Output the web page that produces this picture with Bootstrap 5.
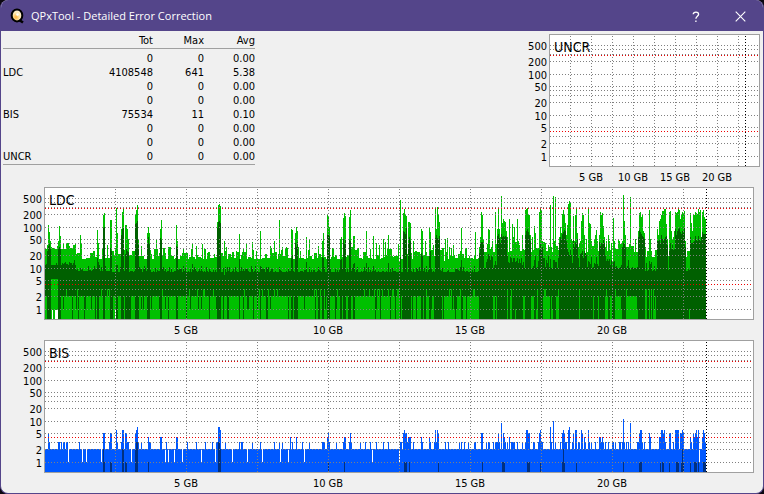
<!DOCTYPE html>
<html lang="en">
<head>
<meta charset="utf-8">
<meta name="viewport" content="width=device-width, initial-scale=1">
<title>QPxTool - Detailed Error Correction</title>
<link rel="stylesheet" href="https://cdn.jsdelivr.net/npm/bootstrap@5.3.0/dist/css/bootstrap.min.css">
<style>
  body { background: #0b0710; font-family: "DejaVu Sans Condensed", "DejaVu Sans", sans-serif; font-size: 11px; line-height: 14px; color: #000; }
  .app-window { background: #f0f0f0; border: 1px solid #54458a; border-top: 0; border-radius: 8px; overflow: hidden; }
  .titlebar { background: #54458a; color: #fff; height: 31px; font: 11px/16px "Open Sans", "Noto Sans", sans-serif; padding-left: 9px; }
  .titlebar h1 { font: inherit; margin-left: 6px; }
  .titlebar button { width: 45px; height: 31px; color: #fff; background: none; border: 0; }
  .content { padding-top: 3px; }
  .stats { width: 252px; margin-left: 2px; table-layout: fixed; border-bottom: 1px solid #a0a0a0; }
  .stats .col-total { width: 100px; }
  .stats .col-value { width: 51px; }
  .stats th, .stats td { padding: 0; font-weight: 400; text-align: right; }
  .stats .name { text-align: left; }
  .stats thead th { border-bottom: 1px solid #a0a0a0; }
  .stats tbody tr:first-child > * { padding-top: 3px; }
  .plot { height: 153px; width: 100%; display: block; }
  .plot-small { width: 249px; }
  .plot text { fill: #000; font-size: 11px; }
  .plot .plot-name { font-size: 14px; }
</style>
<script src="https://cdn.jsdelivr.net/npm/bootstrap@5.3.0/dist/js/bootstrap.bundle.min.js"></script>
</head>
<body>
<div class="app-window d-flex flex-column min-vh-100">
  <header class="titlebar d-flex align-items-center">
    <svg width="15" height="16" viewBox="0 0 15 16" aria-hidden="true">
      <defs><radialGradient id="disc" cx=".4" cy=".65" r=".7"><stop offset="0" stop-color="#ffb33c"/><stop offset=".5" stop-color="#ffe9b0"/><stop offset="1" stop-color="#fff4e8"/></radialGradient></defs>
      <path d="M8.5 11.5l4.5 3" stroke="#000" stroke-width="2.6"/>
      <ellipse cx="7" cy="7.4" rx="5.3" ry="6" fill="url(#disc)" stroke="#000" stroke-width="2"/>
      <circle cx="7.5" cy="6.5" r="1.3" fill="#fff"/>
    </svg>
    <h1 class="mb-0 flex-grow-1">QPxTool - Detailed Error Correction</h1>
    <button type="button" aria-label="Help"><svg width="8" height="12" viewBox="0 0 8 12" fill="none" stroke="#fff" stroke-width="1.3"><path d="M1.2 3.3C1.4.4 6.6.3 6.6 3.3C6.6 5.1 3.9 5.4 3.9 7.8"/><path d="M3.9 9.4v1.5"/></svg></button>
    <button type="button" aria-label="Close"><svg width="11" height="11" viewBox="0 0 11 11" stroke="#fff" stroke-width="1.1"><path d="M.7.7l9.6 9.6M10.3.7L.7 10.3"/></svg></button>
  </header>
  <main class="content flex-grow-1">
    <div class="d-flex justify-content-between align-items-start">
      <table class="stats">
        <colgroup><col><col class="col-total"><col class="col-value"><col class="col-value"></colgroup>
        <thead><tr><th class="name"></th><th>Tot</th><th>Max</th><th>Avg</th></tr></thead>
        <tbody>
          <tr><th class="name"></th><td>0</td><td>0</td><td>0.00</td></tr>
          <tr><th class="name">LDC</th><td>4108548</td><td>641</td><td>5.38</td></tr>
          <tr><th class="name"></th><td>0</td><td>0</td><td>0.00</td></tr>
          <tr><th class="name"></th><td>0</td><td>0</td><td>0.00</td></tr>
          <tr><th class="name">BIS</th><td>75534</td><td>11</td><td>0.10</td></tr>
          <tr><th class="name"></th><td>0</td><td>0</td><td>0.00</td></tr>
          <tr><th class="name"></th><td>0</td><td>0</td><td>0.00</td></tr>
          <tr><th class="name">UNCR</th><td>0</td><td>0</td><td>0.00</td></tr>
        </tbody>
      </table>
      <svg class="plot plot-small" data-name="UNCR" data-left="35" data-right="3"></svg>
    </div>
    <svg class="plot" data-name="LDC" data-left="43" data-right="9"></svg>
    <svg class="plot" data-name="BIS" data-left="43" data-right="9"></svg>
  </main>
</div>
<script>
// Samples are indexed 45..705 along the disc; levels are bar heights on the log axis.
const FIRST = 45, LAST = 705, H = 133;
const level = v => v < 1 ? 0 : Math.round(10 + 41 * Math.log10(v) + .2);

function ldcSeries() {
  let s = 77; const rnd = () => (s = (s * 16807) % 2147483647) / 2147483647;
  const max = {}, avg = {}, min = {};
  let hold = 0, current = 0;
  for (let x = FIRST; x <= LAST; x++) {
    const early = x < 76, base = early ? 70 : x < 480 ? 60 : x < 640 ? 67 : 62;
    if (hold-- <= 0) { const r = rnd(); current = Math.round(r * r * (early ? 6 : 12)); hold = Math.floor(rnd() * 3); }
    max[x] = base + current;
    const ab = early ? 54 : x < 110 ? 48 : x < 480 ? 47 : x < 640 ? 51 : 48;
    avg[x] = ab + Math.round(Math.pow(rnd(), 3) * (x > 480 ? 14 : 6));
    const dark = x < 380 ? .1 : x < 480 ? .25 : x < 602 ? .35 : x < 640 ? .18 : .72, m = rnd();
    min[x] = m < dark ? 0 : m < dark + .06 ? 10 : m > .9 ? 30 : 23;
  }
  // x, max levels of consecutive samples, average level (0 keeps the baseline)
  const peaks = [
    [47,[74,94,87,78],76],[58,[78,93,83],72],[63,[76],0],[69,[73],0],[80,[84,75],0],[97,[89,76],64],[103,[104,106],94],[107,[74],0],[110,[99,99],75],[116,[111,86],60],[121,[90,107,111],96],[125,[94,94,90,80],70],[135,[104,109,114,80],100],[141,[73],0],[147,[86,92,86],82],[156,[79],0],[160,[90,99],84],[176,[94,78],76],[183,[70],0],[192,[78],0],[196,[73],0],
    [192,[76],56],[196,[73],0],[202,[75],0],[217,[97,114,115,113],100],[224,[78],52],[226,[72],0],[239,[85],60],[243,[70],0],[246,[76],0],[252,[77],54],[260,[88],60],[270,[73],0],[274,[78],0],[279,[99],56],[286,[72],0],[291,[90,89],66],[295,[86,92,88],80],[306,[82],58],[309,[80],0],[318,[73],0],[322,[78,86],66],[327,[104,103,92],88],[340,[80,82],62],[343,[101,106,103],82],[349,[102,109],80],[353,[83,83],60],[366,[88],58],[373,[83],58],[376,[76],0],[379,[74],0],[383,[80],56],[385,[77],0],[388,[84],58],
    [398,[75],0],[400,[119],66],[403,[106,110,105,103],92],[408,[97,97,96],82],[413,[78],0],[421,[90,88],68],[425,[78],0],[429,[91,87],68],[433,[74],0],[435,[111,90,112,105,97],86],[445,[80],0],[447,[81],0],[453,[74],0],[461,[91],64],[475,[87],0],[479,[72,82,107,104,80],80],[488,[90,89,70,72,78],66],[495,[107],60],[497,[90,112,90,82,123,96,100,98,97,88],88],[507,[82],0],[509,[100],62],[512,[95,82,92],62],[517,[100,78,74],64],[522,[84],0],[525,[109,110,111,104,104,84],92],[532,[82],0],[534,[93,86],64],[539,[107,112,108,78],76],[545,[76],0],[550,[114],62],[553,[123,78,122],64],[559,[82,92,86,105,109,105,96,84],90],[567,[94,115,118,116,80],70],[573,[103,78,104,111,86],84],
    [580,[78,98,106,104,84,98,80],68],[588,[110,96,95,78],62],[594,[80,84,89,78],62],[599,[84,107,104,106,93,82],80],[606,[78],0],[608,[84,78],62],[613,[101,78],60],[618,[80],0],[622,[78,124,98,84],76],[630,[122],56],[635,[80],0],[638,[88,106,107,102,104,88,86],90],[649,[109,80],58],[657,[90,84,98,100,104,108,108,110,110,95,80],84],[669,[107,108,88,80,82,88],76],[675,[107,106,107,111,109,100,105,107,106,108,78],92],[690,[106,96,88,104,104,107,106,105,110,107,109,88],84],[702,[107,109,102,100],88]
  ];
  for (const [x, tops, a] of peaks) tops.forEach((t, i) => {
    max[x + i] = t;
    if (a) avg[x + i] = Math.min(t - 6, a - Math.round(rnd() * 8));
    if (a > 58) min[x + i] = 0;
  });
  [399, 444, 585, 612, 701].forEach(x => max[x] = 58);
  for (let x = 51; x < 58; x++) min[x] = 40;
  return { max, avg, min, empty: [52, 55, 56, 57, 115] };
}

function bisSeries() {
  const max = {}, avg = {}, min = {};
  for (let x = FIRST; x <= LAST; x++) max[x] = level(2);
  const values = {
    1: "68 82 86 101 131 165 168 174 182 201 215 232 247 262 280 288 304 372 399 699",
    3: "49 58 59 61 63 64 66 67 79 109 117 121 127 128 138 141 149 150 166 187 196 205 212 216 217 225 239 241 242 252 260 274 279 282 292 302 309 322 323 324 329 336 343 349 351 360 365 370 376 383 388 400 401 407 413 422 430 434 436 445 448 459 461 464 468 474 475 486 488 489 493 495 496 497 499 505 507 511 512 513 514 517 522 525 533 534 538 541 542 551 555 560 565 566 572 578 579 585 589 591 595 601 603 605 608 612 613 615 619 620 622 624 626 628 637 638 642 644 665 673 691 705",
    4: "148 160 161 176 177 290 296 327 344 345 408 409 410 421 429 504 509 584 599 600 602 650 659 660 690 694 697 702",
    5: "48 103 104 110 111 125 126 135 328 350 403 405 406 438 481 482 498 503 528 529 539 562 564 573 582 639 649 663 669 670 680 681 683 693 695 704",
    6: "116 122 123 136 220 404 435 437 526 527 540 563 568 575 576 581 588 640 641 661 662 664 675 676 677 678 682 696 698 703",
    7: "137 218 219 550 569", 9: "501 630", 10: "553", 11: "623"
  };
  for (const v in values) values[v].split(" ").forEach(x => max[x] = level(+v));
  "104 110 111 125 126 148 328 344 404 405 406 409 438 482 502 503 504 527 528 529 540 562 564 576 623 639 640 641 660 662 663 669 676 677 678 681 683 690 694 695 696 698 703 704 705".split(" ").forEach(x => avg[x] = level(1));
  [103, 122, 123, 135, 220, 563, 682].forEach(x => avg[x] = level(2));
  [136, 137, 218, 219].forEach(x => avg[x] = level(3));
  return { max, avg, min, empty: [] };
}

const data = { LDC: ldcSeries(), BIS: bisSeries() };
const colours = { LDC: ["#00c000", "#006000"], BIS: ["#0058ff", "#003080"] };

function draw(svg) {
  const { name, left, right } = svg.dataset, L = +left, W = svg.clientWidth - L - right;
  const per = (W - 1) / 25, step = (W - 1) / 709;
  const xOf = g => Math.ceil(L + g * per - .01);
  const bars = series => {
    let d = "";
    for (const k in series) {
      if (!series[k]) continue;
      const x0 = Math.round(L + (k - 44) * step), x1 = Math.max(x0 + 1, Math.round(L + (k - 43) * step));
      d += `M${x0} ${H - 1}v${-series[k]}H${x1}V${H - 1}z`;
    }
    return d;
  };
  let out = `<rect x="${L}" y="0" width="${W}" height="${H}" fill="#a0a0a0"/><rect x="${L + 1}" y="1" width="${W - 2}" height="${H - 2}" fill="#fff"/>`;
  const s = data[name];
  if (s) {
    const [light, dark] = colours[name], gaps = {};
    s.empty.forEach(x => gaps[x] = 9);
    out += `<path fill="${light}" d="${bars(s.max)}"/><path fill="${dark}" d="${bars(s.avg)}"/><path fill="${light}" d="${bars(s.min)}"/><path fill="#fff" d="${bars(gaps)}"/>`;
  }
  const yOf = v => Math.floor(122 - 41 * Math.log10(v) + .01);
  const hline = (y, c) => `<path d="M${L + 1} ${y + .5}H${L + W - 1}" stroke="${c}" stroke-dasharray="1 2"/>`;
  const vline = (x, c) => `<path d="M${x + .5} 2V${H - 1}" stroke="${c}" stroke-dasharray="1 2"/>`;
  for (const v of [1, 2, 3, 5, 10, 20, 30, 40, 50, 100, 200, 300, 400, 500]) out += hline(yOf(v), "#808080");
  for (let g = 2.5; g < 25; g += 2.5) out += vline(xOf(g), "#808080");
  out += hline(yOf(4), "#f00000") + hline(yOf(300) + 1, "#f00000") + vline(Math.round(L + 23.34 * per), "#000");
  for (const v of [1, 2, 5, 10, 20, 50, 100, 200, 500]) out += `<text x="${L - 2}" y="${yOf(v) + 5}" text-anchor="end">${v}</text>`;
  for (const g of [5, 10, 15, 20]) out += `<text x="${xOf(g)}" y="147" text-anchor="middle">${g} GB</text>`;
  out += `<text class="plot-name" x="${L + 5}" y="18">${name}</text>`;
  svg.innerHTML = `<g shape-rendering="crispEdges">${out}</g>`;
}
const drawAll = () => document.querySelectorAll(".plot").forEach(draw);
drawAll();
addEventListener("resize", drawAll);
</script>
</body>
</html>
